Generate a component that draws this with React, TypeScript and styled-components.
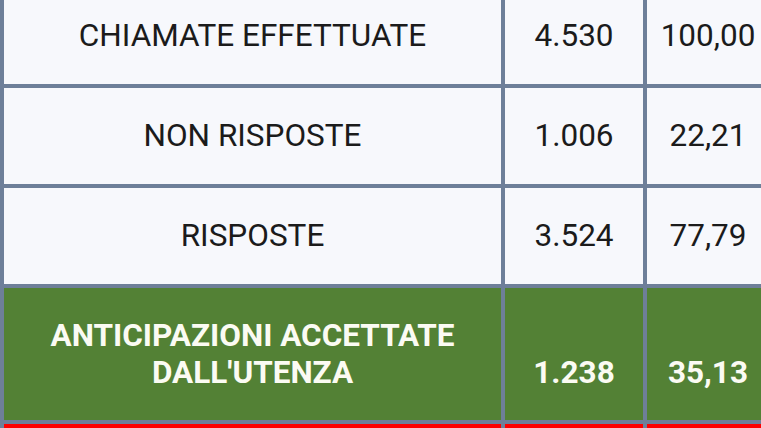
import React from "react";
import styled, { createGlobalStyle } from "styled-components";

const Global = createGlobalStyle`
  html, body { margin: 0; padding: 0; background: #f7f8fc; overflow: hidden; }
  body { font-family: Roboto, "Liberation Sans", Arial, sans-serif; }
`;

type Tone = "plain" | "green" | "red";

const Frame = styled.div`
  width: 761px;
  height: 428px;
  overflow: hidden;
`;

const Table = styled.div`
  display: grid;
  grid-template-columns: 497px 138px 122px;
  gap: 4px;
  padding: 4px;
  width: max-content;
  margin-top: -16px;
  background: #6e7f99;
`;

const Row = styled.div`
  display: contents;
`;

const bg: Record<Tone, string> = {
  plain: "#f7f8fc",
  green: "#538135",
  red: "#fe0000",
};

const Cell = styled.div<{ $tone: Tone; $tall?: boolean; $lowered?: boolean }>`
  display: flex;
  align-items: center;
  justify-content: center;
  text-align: center;
  background: ${(p) => bg[p.$tone]};
  color: ${(p) => (p.$tone === "plain" ? "#1b1b1b" : "#fbfbf3")};
  font-size: 31.5px;
  font-weight: ${(p) => (p.$tone === "plain" ? 400 : 700)};
  line-height: 37.5px;
  height: ${(p) => (p.$tall ? "132px" : "96px")};
  padding-top: ${(p) => (p.$lowered ? "37.5px" : "0")};
  box-sizing: border-box;
`;

const rows: { label: React.ReactNode; n: string; pct: string; tone: Tone; tall?: boolean }[] = [
  { label: "CHIAMATE EFFETTUATE", n: "4.530", pct: "100,00", tone: "plain" },
  { label: "NON RISPOSTE", n: "1.006", pct: "22,21", tone: "plain" },
  { label: "RISPOSTE", n: "3.524", pct: "77,79", tone: "plain" },
  {
    label: (
      <>
        ANTICIPAZIONI ACCETTATE
        <br />
        DALL'UTENZA
      </>
    ),
    n: "1.238",
    pct: "35,13",
    tone: "green",
    tall: true,
  },
  { label: "", n: "", pct: "", tone: "red", tall: true },
];

export default function App() {
  return (
    <Frame>
      <Global />
      <Table>
        {rows.map((r, i) => (
          <Row key={i}>
            <Cell $tone={r.tone} $tall={r.tall}>
              <span>{r.label}</span>
            </Cell>
            <Cell $tone={r.tone} $tall={r.tall} $lowered={r.tone === "green"}>
              {r.n}
            </Cell>
            <Cell $tone={r.tone} $tall={r.tall} $lowered={r.tone === "green"}>
              {r.pct}
            </Cell>
          </Row>
        ))}
      </Table>
    </Frame>
  );
}
